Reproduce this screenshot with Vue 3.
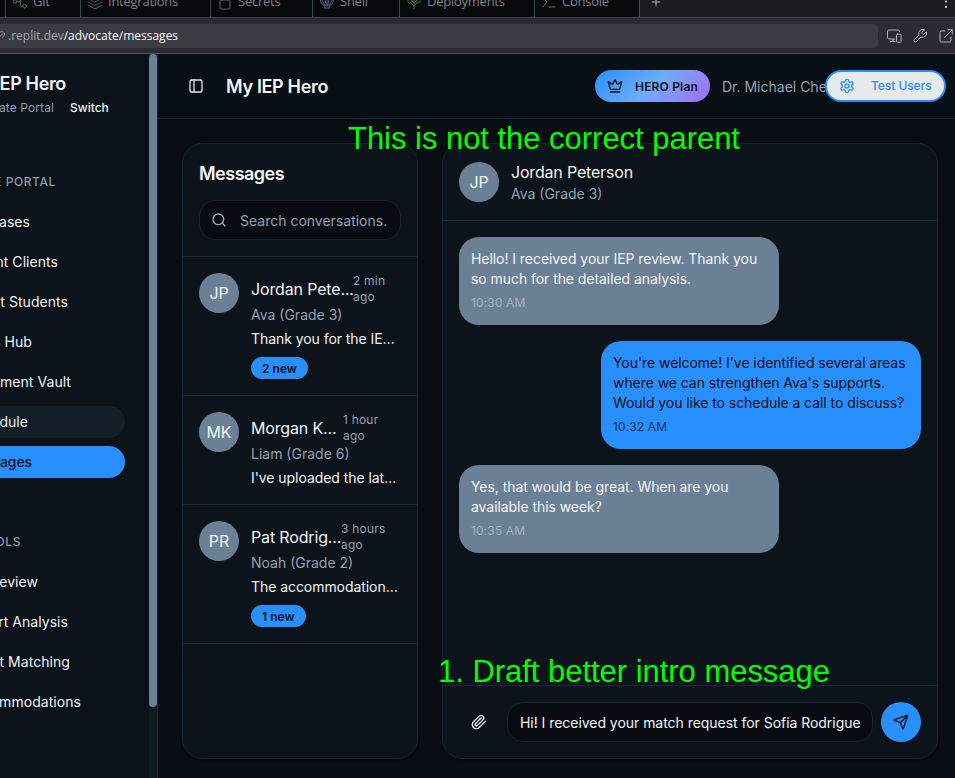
<script setup>
const tabs = [
  { name: 'Git', icon: 'git', width: 75 },
  { name: 'Integrations', icon: 'layers', width: 130 },
  { name: 'Secrets', icon: 'lock', width: 102 },
  { name: 'Shell', icon: 'shell', width: 87 },
  { name: 'Deployments', icon: 'tree', width: 135 },
  { name: 'Console', icon: 'console', width: 105 },
]
const portal = [
  { text: 'ases', end: 30 },
  { text: 'nt Clients', end: 58 },
  { text: 't Students', end: 68 },
  { text: 's Hub', end: 32 },
  { text: 'ment Vault', end: 71 },
  { text: 'dule', end: 28, state: 'hover' },
  { text: 'ages', end: 32, state: 'active' },
]
const tools = [
  { text: 'eview', end: 38 },
  { text: 'rt Analysis', end: 68 },
  { text: 't Matching', end: 70 },
  { text: 'mmodations', end: 81 },
]
const conversations = [
  { initials: 'JP', name: 'Jordan Pete...', nameWidth: 102, time: ['2 min', 'ago'], student: 'Ava (Grade 3)', preview: 'Thank you for the IEP review', badge: '2 new' },
  { initials: 'MK', name: 'Morgan K...', nameWidth: 92, time: ['1 hour', 'ago'], student: 'Liam (Grade 6)', preview: "I've uploaded the latest report", badge: '' },
  { initials: 'PR', name: 'Pat Rodrig...', nameWidth: 90, time: ['3 hours', 'ago'], student: 'Noah (Grade 2)', preview: 'The accommodations look good', badge: '1 new' },
]
const messages = [
  { mine: false, lines: ['Hello! I received your IEP review. Thank you', 'so much for the detailed analysis.'], time: '10:30 AM' },
  { mine: true, lines: ["You're welcome! I've identified several areas", "where we can strengthen Ava's supports.", 'Would you like to schedule a call to discuss?'], time: '10:32 AM' },
  { mine: false, lines: ['Yes, that would be great. When are you', 'available this week?'], time: '10:35 AM' },
]
</script>

<template>
  <div class="window">
    <div class="tabs">
      <div class="tab-lead"></div>
      <div v-for="t in tabs" :key="t.name" class="tab" :style="{ width: t.width + 'px' }">
        <svg v-if="t.icon === 'git'" class="tab-icon" viewBox="0 0 16 16" stroke="#3f7a50"><circle cx="3.2" cy="7.5" r="1.8" /><circle cx="12.6" cy="12.2" r="1.8" /><path d="M5 7.5h3.500V12.200H10.800M8.500 7.500V4H13" /></svg>
        <svg v-else-if="t.icon === 'layers'" class="tab-icon" viewBox="0 0 16 16" stroke="#55585d"><path d="M1 4.500 8 1l7 3.500L8 8zM1 8l7 3.500L15 8M1 11.300l7 3.500 7-3.500" /></svg>
        <svg v-else-if="t.icon === 'lock'" class="tab-icon" viewBox="0 0 16 16" stroke="#606267"><rect x="3" y="6" width="10" height="9" rx="1.200" /><path d="M5 6V3a3 3 0 0 1 6 0v3" /></svg>
        <svg v-else-if="t.icon === 'shell'" class="tab-icon" viewBox="0 0 16 16" stroke="#55647c"><path d="M5.500 14h5v-2.200c3-1.500 4-3.800 4-6C14 2 11 1 8 1S2 2 1.500 5.800c0 2.200 1 4.500 4 6zM6 12 2.500 5M7.300 12 5.500 3M8.700 12l1.800-9M10 12l3.500-7M8 12V2" /></svg>
        <svg v-else-if="t.icon === 'tree'" class="tab-icon" viewBox="0 0 16 16" stroke="#36734b"><path d="M8 15V3M8 9 3 4M8 9l5-5M8 12l-3-3M8 12l3-3M2 8c0-4 2-7 6-7s6 3 6 7l-2 1-2-2-2 2-2-2-2 2z" /></svg>
        <svg v-else class="tab-icon" viewBox="0 0 16 16" stroke="#797249"><path d="m2 4 4 4-4 5M8 13h6" /></svg>
        <span>{{ t.name }}</span>
      </div>
      <div class="tab-rest">
        <svg class="plus" viewBox="0 0 10 10"><path d="M5 1v8M1 5h8" /></svg>
        <svg class="more" viewBox="0 0 4 16"><rect x="1" y="0" width="2" height="2" /><rect x="1" y="5.500" width="2" height="2" /><rect x="1" y="11" width="2" height="2" /></svg>
      </div>
    </div>

    <div class="urlbar">
      <div class="url">
        <svg class="link" viewBox="0 0 12 12"><path d="M5 7.500 9 3.500M4 4.500l1.500-2c1.500-1.500 5-1 5 1.500 0 1.500-1 2.200-2 3.200M0 8.500c2 1.500 3.500.5 5-1" /></svg>
        <span class="host">.replit.dev</span><span class="path">/advocate/messages</span>
      </div>
      <svg class="tool" viewBox="0 0 16 16"><path d="M9 11H3a1.500 1.500 0 0 1-1.500-1.500v-6A1.500 1.500 0 0 1 3 2h9a1.500 1.500 0 0 1 1.500 1.500M7 11v2.500M4.500 13.500H9" /><rect x="10.500" y="6.200" width="4.600" height="8" rx="1" /></svg>
      <svg class="tool" viewBox="0 0 16 16"><path d="M9.800 4.200a.7.7 0 0 0 0 1l1 1a.7.7 0 0 0 1 0l2.500-2.500a4 4 0 0 1-5.300 5.300l-4.700 4.700a1.400 1.400 0 0 1-2-2L7 7a4 4 0 0 1 5.300-5.300z" /></svg>
      <svg class="tool" viewBox="0 0 16 16"><path d="M7 3H3.500A1.500 1.500 0 0 0 2 4.500v8A1.500 1.500 0 0 0 3.500 14h8a1.500 1.500 0 0 0 1.500-1.500V9M10 1.800h4.300V6M14 2 6.500 9.500" /></svg>
    </div>

    <div class="body">
      <aside class="sidebar">
        <div class="side-content">
          <div class="brand">IEP Hero</div>
          <div class="brand-sub"><span class="sub-left">ate Portal</span><span class="switch">Switch</span></div>
          <div class="group first"><span :style="{ width: '56px' }">E PORTAL</span></div>
          <nav>
            <div v-for="i in portal" :key="i.text" class="item" :class="i.state"><span :style="{ width: i.end + 'px' }">{{ i.text }}</span></div>
          </nav>
          <div class="group second"><span :style="{ width: '21px' }">OLS</span></div>
          <nav>
            <div v-for="i in tools" :key="i.text" class="item"><span :style="{ width: i.end + 'px' }">{{ i.text }}</span></div>
          </nav>
        </div>
        <div class="track"><div class="thumb"></div></div>
      </aside>

      <main class="main">
        <header class="top">
          <svg class="panel-icon" viewBox="0 0 24 24"><rect x="3" y="3" width="18" height="18" rx="2" /><path d="M9 3v18" /></svg>
          <h1>My IEP Hero</h1>
          <div class="plan">
            <svg viewBox="0 0 24 24"><path d="M11.562 3.266a.5.5 0 0 1 .876 0L15.390 8.870a1 1 0 0 0 1.516.294L21.183 5.500a.5.5 0 0 1 .798.519l-2.834 10.246a1 1 0 0 1-.956.734H5.810a1 1 0 0 1-.957-.734L2.020 6.020a.5.5 0 0 1 .798-.519l4.276 3.664a1 1 0 0 0 1.516-.294zM5 21h14" /></svg>
            <span>HERO Plan</span>
          </div>
          <div class="user">Dr. Michael Che</div>
          <div class="test">
            <svg viewBox="0 0 24 24"><path d="M12.220 2h-.44a2 2 0 0 0-2 2v.18a2 2 0 0 1-1 1.730l-.43.25a2 2 0 0 1-2 0l-.15-.08a2 2 0 0 0-2.730.73l-.22.38a2 2 0 0 0 .73 2.730l.15.1a2 2 0 0 1 1 1.720v.51a2 2 0 0 1-1 1.740l-.15.09a2 2 0 0 0-.73 2.730l.22.38a2 2 0 0 0 2.730.73l.15-.08a2 2 0 0 1 2 0l.43.25a2 2 0 0 1 1 1.730V20a2 2 0 0 0 2 2h.44a2 2 0 0 0 2-2v-.18a2 2 0 0 1 1-1.730l.43-.25a2 2 0 0 1 2 0l.15.08a2 2 0 0 0 2.730-.73l.22-.39a2 2 0 0 0-.73-2.730l-.15-.08a2 2 0 0 1-1-1.740v-.5a2 2 0 0 1 1-1.740l.15-.09a2 2 0 0 0 .73-2.730l-.22-.38a2 2 0 0 0-2.730-.73l-.15.08a2 2 0 0 1-2 0l-.43-.25a2 2 0 0 1-1-1.730V4a2 2 0 0 0-2-2z" /><circle cx="12" cy="12" r="3" /></svg>
            <span>Test Users</span>
          </div>
        </header>

        <div class="content">
          <section class="card list">
            <div class="list-head">
              <h2>Messages</h2>
              <div class="search">
                <svg viewBox="0 0 24 24"><circle cx="11" cy="11" r="8" /><path d="m21 21-4.300-4.300" /></svg>
                <span>Search conversations...</span>
              </div>
            </div>
            <div v-for="c in conversations" :key="c.initials" class="conv">
              <div class="avatar">{{ c.initials }}</div>
              <div class="conv-body">
                <div class="conv-top">
                  <div class="name" :style="{ width: c.nameWidth + 'px' }">{{ c.name }}</div>
                  <div class="time"><div v-for="w in c.time" :key="w">{{ w }}</div></div>
                </div>
                <div class="student">{{ c.student }}</div>
                <div class="preview">{{ c.preview }}</div>
                <div v-if="c.badge" class="badge">{{ c.badge }}</div>
              </div>
            </div>
          </section>

          <section class="card chat">
            <div class="chat-head">
              <div class="avatar">JP</div>
              <div>
                <div class="chat-name">Jordan Peterson</div>
                <div class="chat-sub">Ava (Grade 3)</div>
              </div>
            </div>
            <div class="thread">
              <div v-for="m in messages" :key="m.time" class="bubble" :class="{ mine: m.mine }">
                <div v-for="l in m.lines" :key="l" class="line">{{ l }}</div>
                <div class="stamp">{{ m.time }}</div>
              </div>
            </div>
            <div class="composer">
              <svg class="clip" viewBox="0 0 24 24"><path d="m21.440 11.050-9.190 9.190a6 6 0 0 1-8.490-8.490l8.570-8.570A4 4 0 1 1 18 8.840l-8.590 8.570a2 2 0 0 1-2.830-2.830l8.490-8.480" /></svg>
              <div class="input"><span>Hi! I received your match request for Sofia Rodrigue</span></div>
              <div class="send">
                <svg viewBox="0 0 24 24"><path d="M14.536 21.686a.5.5 0 0 0 .937-.024l6.500-19a.496.496 0 0 0-.635-.635l-19 6.500a.5.5 0 0 0-.024.937l7.930 3.180a2 2 0 0 1 1.112 1.110zM21.854 2.147l-10.940 10.939" /></svg>
              </div>
            </div>
          </section>
        </div>
      </main>
    </div>

    <div class="note note-top">This is not the correct parent</div>
    <div class="note note-bottom">1. Draft better intro message</div>
  </div>
</template>

<style>
body { background: #080d14; overflow: hidden; }
</style>

<style scoped>
* { box-sizing: border-box; }
h1, h2 { margin: 0; }
svg { flex: none; fill: none; stroke-linecap: round; stroke-linejoin: round; }
.window { position: relative; width: 955px; height: 778px; overflow: hidden; display: flex; flex-direction: column; font-family: Inter, sans-serif; font-size: 14px; letter-spacing: -0.06px; color: #f2f4f6; white-space: nowrap; }

.tabs { height: 18px; flex: none; display: flex; background: #07090b; font-family: "Open Sans", sans-serif; font-size: 13px; letter-spacing: -0.25px; color: #808387; border-bottom: 1px solid #3d404b; }
.tab-lead { width: 5px; }
.tab { height: 17px; border-left: 1px solid #3c4354; display: flex; gap: 5px; padding-left: 6px; }
.tab span { line-height: 18px; margin-top: -8px; }
.tab-icon { width: 16px; height: 16px; margin-top: -6px; stroke-width: 1; }
.tab-rest { flex: 1; background: #1b1c21; border-left: 1px solid #4c5163; display: flex; justify-content: space-between; padding: 0 7px 0 11px; }
.plus { width: 10px; height: 10px; margin-top: -3px; stroke: #b5b7ba; stroke-width: 1; }
.more { width: 4px; height: 16px; margin-top: -5px; fill: #b5b7ba; }

.urlbar { height: 36px; flex: none; display: flex; align-items: center; background: #2a2c35; border-bottom: 1px solid #4e5367; overflow: hidden; }
.url { width: 878px; flex: none; height: 24px; background: #3a3b43; border-radius: 0 4px 4px 0; display: flex; align-items: center; font-family: "Open Sans", sans-serif; font-size: 12px; letter-spacing: 0; margin-right: 8px; }
.link { width: 12px; height: 12px; margin-left: -6px; margin-right: 2px; stroke: #909399; }
.host { color: #a4a6ab; }
.path { color: #fafafa; }
.tool { width: 16px; height: 16px; margin-right: 10px; stroke: #b2b4b9; stroke-width: 1; }

.body { flex: 1; min-height: 0; display: flex; }
.sidebar { width: 158px; flex: none; display: flex; background: #0b1219; border-right: 1px solid #17283a; }
.side-content { width: 149px; overflow: hidden; }
.brand { margin: 20px 0 0 -5px; font-size: 18px; font-weight: 600; line-height: 20px; letter-spacing: -0.36px; }
.brand-sub { display: flex; align-items: center; height: 20px; margin-top: 3px; font-size: 12px; letter-spacing: 0.1px; }
.sub-left { width: 54px; color: #93a1b1; display: flex; justify-content: flex-end; }
.switch { margin-left: 16px; font-weight: 500; letter-spacing: 0; }
.group { display: flex; height: 20px; align-items: center; font-size: 12px; font-weight: 500; color: #8e9baa; letter-spacing: 0.6px; }
.group span, .item span { display: flex; justify-content: flex-end; }
.first { margin-top: 54px; margin-bottom: 15px; }
.second { margin-top: 53px; margin-bottom: 15px; }
.item { height: 32px; margin-bottom: 8px; display: flex; align-items: center; width: 125px; border-radius: 0 16px 16px 0; padding-bottom: 1px; letter-spacing: 0.05px; }
.item.hover { background: #131e29; }
.item.active { background: #288fff; color: #0a1119; font-weight: 500; letter-spacing: -0.1px; box-shadow: 0 1px 2px rgba(0, 0, 0, .3); }
.track { width: 8px; background: #101a23; }
.thumb { height: 653px; border-radius: 4px; background: #6b8095; }
.main { flex: 1; display: flex; flex-direction: column; min-width: 0; background: #080d14; }
.top { height: 65px; flex: none; background: #080f15; border-bottom: 1px solid #17283a; display: flex; align-items: center; padding-left: 30px; }
.panel-icon { width: 16px; height: 16px; stroke: #dfe2e5; stroke-width: 2; }
h1 { font-size: 18px; font-weight: 600; margin-left: 22px; width: 369px; letter-spacing: -0.33px; }
.plan { width: 115px; height: 32px; border-radius: 16px; background: linear-gradient(135deg, #288fff 0%, #6fadf7 50%, #a46bf2 100%); color: #0a1119; display: flex; align-items: center; padding-left: 12px; gap: 12px; font-size: 12px; font-weight: 600; letter-spacing: 0.18px; }
.plan svg { width: 16px; height: 16px; stroke: #0a1119; stroke-width: 2; }
.user { width: 103px; margin-left: 12px; overflow: hidden; color: #93a1b1; letter-spacing: 0; }
.test { width: 121px; height: 32px; border: 2px solid #288fff; border-radius: 16px; background: #e8e9ea; color: #288fff; display: flex; align-items: center; padding: 0 0 1px 12px; gap: 16px; font-size: 12px; font-weight: 500; }
.test svg { width: 16px; height: 16px; stroke: #288fff; stroke-width: 2; }

.content { flex: 1; display: flex; gap: 24px; padding: 24px 17px 19px 24px; }
.card { background: #0c131b; border: 1px solid #15242f; border-radius: 20px; overflow: hidden; display: flex; flex-direction: column; box-shadow: 0 1px 2px rgba(0, 0, 0, .4); }
.list { width: 236px; flex: none; }
.list-head { height: 113px; border-bottom: 1px solid #17283a; padding: 16px; }
h2 { font-size: 18px; font-weight: 600; line-height: 28px; letter-spacing: -0.5px; }
.search { width: 202px; height: 40px; margin-top: 12px; border: 1px solid #15242f; border-radius: 16px; background: #080c12; display: flex; align-items: center; gap: 13px; padding: 0 12px 0 11px; color: #93a1b1; letter-spacing: 0; }
.search svg { width: 16px; height: 16px; stroke: #a1adba; stroke-width: 2; }
.search span { overflow: hidden; }
.conv { padding: 16px; border-bottom: 1px solid #17283a; display: flex; gap: 12px; }
.avatar { width: 40px; height: 40px; flex: none; border-radius: 50%; background: #6b8095; display: flex; align-items: center; justify-content: center; font-size: 16px; letter-spacing: -0.1px; }
.conv-body { width: 150px; }
.conv-top { height: 32px; display: flex; align-items: center; }
.name { flex: none; font-size: 16px; letter-spacing: -0.15px; }
.time { font-size: 12px; line-height: 16px; color: #93a1b1; letter-spacing: 0.2px; }
.student { line-height: 20px; color: #93a1b1; letter-spacing: 0; }
.preview { line-height: 20px; margin-top: 4px; width: 147px; overflow: hidden; text-overflow: ellipsis; }
.badge { display: inline-flex; align-items: center; height: 22px; margin-top: 8px; padding: 0 11px; border-radius: 11px; background: #288fff; color: #0a1119; font-size: 12px; font-weight: 600; letter-spacing: 0.02px; }
.chat { flex: 1; }
.chat-head { height: 77px; flex: none; border-bottom: 1px solid #17283a; padding: 0 16px; display: flex; gap: 12px; align-items: center; }
.chat-name { font-size: 16px; line-height: 24px; letter-spacing: -0.18px; }
.chat-sub { line-height: 20px; color: #93a1b1; letter-spacing: 0; }
.thread { flex: 1; padding: 16px; display: flex; flex-direction: column; gap: 16px; }
.bubble { width: 320px; border-radius: 20px; background: #6b8095; padding: 12px; }
.bubble.mine { align-self: flex-end; background: #288fff; color: #0a1119; }
.line { line-height: 20px; }
.stamp { font-size: 12px; line-height: 16px; margin-top: 4px; color: #a3b0be; height: 20px; padding-top: 2px; letter-spacing: 0.14px; }
.mine .stamp { color: #133354; }
.composer { height: 73px; flex: none; border-top: 1px solid #17283a; display: flex; align-items: center; padding: 0 16px 0 28px; }
.clip { width: 16px; height: 16px; stroke: #f2f4f6; stroke-width: 2; }
.input { width: 366px; height: 40px; margin: 0 8px 0 20px; border: 1px solid #15242f; border-radius: 16px; background: #080c12; padding: 0 11px 0 12px; display: flex; align-items: center; letter-spacing: -0.04px; }
.send { width: 40px; height: 40px; border-radius: 50%; background: #288fff; display: flex; align-items: center; justify-content: center; box-shadow: 0 1px 3px rgba(0, 0, 0, .5); }
.send svg { width: 16px; height: 16px; stroke: #0a1119; stroke-width: 2; }
.note { position: absolute; color: #00ff00; font-family: "Liberation Sans", sans-serif; font-size: 31px; line-height: 36px; letter-spacing: -0.03px; }
.note-top { left: 348px; top: 121px; }
.note-bottom { left: 438px; top: 654px; }
</style>
